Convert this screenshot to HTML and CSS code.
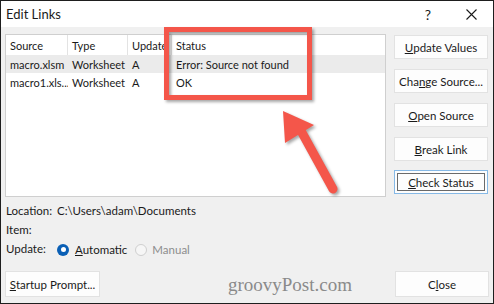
FILE: index.html
```html
<!DOCTYPE html>
<html>
<head>
<meta charset="utf-8">
<link rel="stylesheet" href="styles.css">
</head>
<body>
<div class="window">
  <div class="titlebar">
    <span class="title">Edit Links</span>
    <span class="help">?</span>
    <span class="close-x"><svg width="11" height="11" viewBox="0 0 11 11"><path d="M0.5 0.5 L10.5 10.5 M10.5 0.5 L0.5 10.5" stroke="#1a1a1a" stroke-width="1.1" fill="none"/></svg></span>
  </div>
  <div class="content">
    <div class="main">
      <div class="listbox">
        <div class="row header">
          <div class="cell c1">Source</div>
          <div class="cell c2">Type</div>
          <div class="cell c3">Update</div>
          <div class="cell c4">Status</div>
          <div class="cell c5"></div>
        </div>
        <div class="row sel">
          <div class="cell c1">macro.xlsm</div>
          <div class="cell c2">Worksheet</div>
          <div class="cell c3">A</div>
          <div class="cell c4">Error: Source not found</div>
        </div>
        <div class="row">
          <div class="cell c1">macro1.xls...</div>
          <div class="cell c2">Worksheet</div>
          <div class="cell c3">A</div>
          <div class="cell c4">OK</div>
        </div>
      </div>
      <div class="buttons">
        <div class="btn"><u>U</u>pdate Values</div>
        <div class="btn">Cha<u>n</u>ge Source...</div>
        <div class="btn"><u>O</u>pen Source</div>
        <div class="btn"><u>B</u>reak Link</div>
        <div class="btn focus"><span class="inner"><u>C</u>heck Status</span></div>
      </div>
    </div>
    <div class="info">
      <div class="info-row"><span class="label">Location:</span><span class="value">C:\Users\adam\Documents</span></div>
      <div class="info-row"><span class="label">Item:</span></div>
      <div class="info-row"><span class="label">Update:</span>
        <span class="radio on"><span class="dot"></span></span><span class="rlabel"><u>A</u>utomatic</span>
        <span class="radio off"></span><span class="rlabel dis">Manual</span>
      </div>
    </div>
    <div class="bottom">
      <div class="btn wide"><u>S</u>tartup Prompt...</div>
      <div class="watermark">groovyPost.com</div>
      <div class="btn">C<u>l</u>ose</div>
    </div>
  </div>
  <svg class="annot" width="494" height="304" viewBox="0 0 494 304">
    <rect x="166.5" y="29.5" width="143" height="68" fill="none" stroke="#f4564a" stroke-width="5"/>
    <path d="M300 129 L333 189" stroke="#f4564a" stroke-width="9" stroke-linecap="round" fill="none"/>
    <polygon points="283,111 314,125 285,143" fill="#f4564a"/>
  </svg>
</div>
</body>
</html>
```
FILE: styles.css
```css
* { box-sizing: border-box; }
html, body { margin: 0; padding: 0; }
body {
  font-family: "Lato", "Noto Sans", sans-serif;
  font-size: 11.5px;
  color: #1a1a1a;
  width: 494px;
  height: 304px;
  overflow: hidden;
}
.window {
  position: relative;
  width: 494px;
  height: 304px;
  border: 1px solid #1e1e1e;
  background: #f0f0f0;
  display: flex;
  flex-direction: column;
}
.titlebar {
  height: 26px;
  background: #ffffff;
  display: flex;
  align-items: center;
  padding-left: 5px;
}
.title { font-size: 13px; flex: 1; }
.help { font-size: 14px; width: 20px; margin-right: 28px; text-align: center; }
.close-x { width: 11px; height: 11px; margin-right: 16px; display: flex; }
.content {
  flex: 1;
  padding: 7px 4px 6px 4px;
  display: flex;
  flex-direction: column;
}
.main { display: flex; gap: 8px; }
.listbox {
  width: 381px;
  height: 163px;
  background: #ffffff;
  border: 1px solid #cfcfcf;
}
.row { display: flex; height: 18px; align-items: center; }
.row.header { height: 20px; }
.row.sel { background: #ebebeb; }
.list-text { font-size: 11px; }
.cell {
  padding-left: 4px;
  white-space: nowrap;
  overflow: hidden;
  height: 100%;
  display: flex;
  align-items: center;
  font-size: 11px;
}
.header .cell { border-right: 1px solid #e3e3e3; }
.header .c5 { border-right: none; flex: 1; }
.c1 { width: 62px; }
.c2 { width: 60px; }
.c3 { width: 44px; }
.c4 { width: 140px; }
.buttons {
  display: flex;
  flex-direction: column;
  gap: 10px;
  padding-top: 1px;
}
.btn {
  width: 94px;
  height: 24px;
  background: #fdfdfd;
  border: 1px solid #e2e2e2;
  display: flex;
  align-items: center;
  justify-content: center;
  white-space: nowrap;
}
.btn.focus {
  border: 1px solid #86b9e6;
  padding: 2px;
  height: 24px;
  margin-top: -1px;
}
.btn.focus .inner {
  width: 100%;
  height: 100%;
  border: 1px solid #6a6a6a;
  display: flex;
  align-items: center;
  justify-content: center;
}
.info { margin-top: 4px; display: flex; flex-direction: column; }
.info-row { height: 19px; display: flex; align-items: center; padding-left: 1px; }
.label { width: 51px; }
.radio {
  width: 12px;
  height: 12px;
  border-radius: 50%;
  display: inline-flex;
  align-items: center;
  justify-content: center;
  margin-top: 2px;
}
.radio.on { background: #0a5fb5; }
.radio.on .dot { width: 5px; height: 5px; border-radius: 50%; background: #ffffff; }
.radio.off { border: 1px solid #cfcfcf; background: #f6f6f6; }
.rlabel { margin-left: 6px; margin-right: 8px; margin-top: 2px; }
.rlabel.dis { color: #8d8d8d; margin-left: 5px; }
.bottom {
  margin-top: auto;
  display: flex;
  align-items: center;
}
.btn.wide { width: 95px; height: 26px; }
.bottom .btn { height: 26px; }
.watermark {
  flex: 1;
  font-family: "Liberation Serif", "DejaVu Serif", serif;
  font-size: 19px;
  color: #8a8a8a;
  text-align: right;
  padding-right: 43px;
  padding-top: 2px;
}
.annot {
  position: absolute;
  left: -1px;
  top: -1px;
  pointer-events: none;
  filter: drop-shadow(2px 2px 1.5px rgba(0,0,0,0.35));
}
```
